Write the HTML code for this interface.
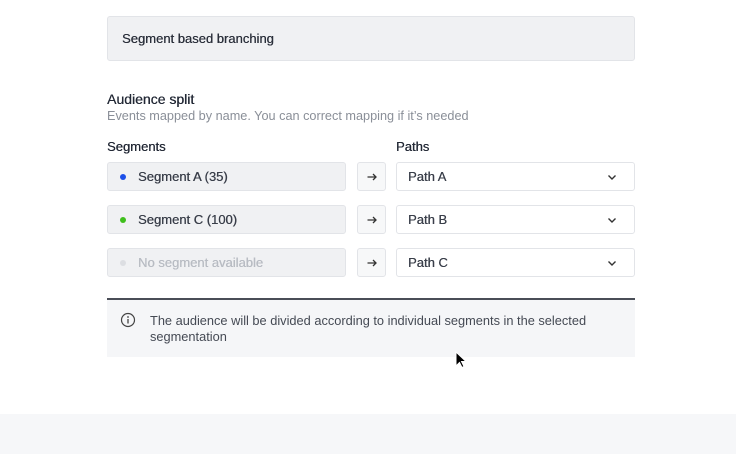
<!DOCTYPE html>
<html><head><style>
*{box-sizing:border-box;margin:0;padding:0}
body{width:736px;height:454px;background:#fff;font-family:"Liberation Sans",sans-serif;color:#232936;position:relative;overflow:hidden}
.abs{position:absolute}
.m{font-weight:normal;text-shadow:0.3px 0 0 currentColor}
.box{position:absolute;border:1px solid #e2e4e8;border-radius:3px}
.seg{background:#f0f1f3;left:107px;width:239px;height:29px;font-size:13px;line-height:27px;padding-left:30px;color:#3a3f4a}
.dot{position:absolute;left:12px;top:11px;width:6px;height:6px;border-radius:50%}
.arr{left:357px;width:29px;height:29px;background:#f7f8f9}
.arr svg{position:absolute;left:8px;top:8px}
.path{left:396px;width:239px;height:29px;background:#fff;font-size:13px;line-height:27px;padding-left:11px;color:#3a3f4a}
.chev{position:absolute;right:16px;top:8px}
</style></head><body>
<div class="box m" style="left:107px;top:16px;width:528px;height:45px;background:#f0f1f3;font-size:13px;line-height:43px;padding-left:14px;color:#2b303b">Segment based branching</div>
<div class="abs m" style="left:107px;top:91px;font-size:14px">Audience split</div>
<div class="abs" style="left:107px;top:109px;font-size:12.7px;color:#8a8f98">Events mapped by name. You can correct mapping if it’s needed</div>
<div class="abs m" style="left:107px;top:139px;font-size:13px">Segments</div>
<div class="abs m" style="left:396px;top:139px;font-size:13px">Paths</div>

<div class="box seg m" style="top:162px"><span class="dot" style="background:#1c4fe8"></span>Segment A (35)</div>
<div class="box seg m" style="top:205px"><span class="dot" style="background:#3fbf1c"></span>Segment C (100)</div>
<div class="box seg m" style="top:248px;color:#b8bcc3"><span class="dot" style="background:#dcdee2"></span>No segment available</div>

<div class="box arr" style="top:162px"><svg width="12" height="12" viewBox="0 0 12 12"><path d="M1.5 6h8.5M7 3l3 3-3 3" fill="none" stroke="#333" stroke-width="1.3"/></svg></div>
<div class="box arr" style="top:205px"><svg width="12" height="12" viewBox="0 0 12 12"><path d="M1.5 6h8.5M7 3l3 3-3 3" fill="none" stroke="#333" stroke-width="1.3"/></svg></div>
<div class="box arr" style="top:248px"><svg width="12" height="12" viewBox="0 0 12 12"><path d="M1.5 6h8.5M7 3l3 3-3 3" fill="none" stroke="#333" stroke-width="1.3"/></svg></div>

<div class="box path m" style="top:162px">Path A<svg class="chev" width="12" height="12" viewBox="0 0 12 12"><path d="M2.5 4.5l3.5 3.5 3.5-3.5" fill="none" stroke="#333" stroke-width="1.4"/></svg></div>
<div class="box path m" style="top:205px">Path B<svg class="chev" width="12" height="12" viewBox="0 0 12 12"><path d="M2.5 4.5l3.5 3.5 3.5-3.5" fill="none" stroke="#333" stroke-width="1.4"/></svg></div>
<div class="box path m" style="top:248px">Path C<svg class="chev" width="12" height="12" viewBox="0 0 12 12"><path d="M2.5 4.5l3.5 3.5 3.5-3.5" fill="none" stroke="#333" stroke-width="1.4"/></svg></div>

<div class="abs" style="left:107px;top:298px;width:528px;height:59px;background:#f5f6f8;border-top:2px solid #4a4e57"></div>
<svg class="abs" style="left:120px;top:312px" width="16" height="16" viewBox="0 0 16 16"><circle cx="8" cy="8" r="6.5" fill="none" stroke="#444" stroke-width="1.2"/><circle cx="8" cy="5" r="0.9" fill="#444"/><path d="M8 7v4.5" stroke="#444" stroke-width="1.3"/></svg>
<div class="abs" style="left:150px;top:313px;width:460px;font-size:12.8px;line-height:16px;color:#454a54">The audience will be divided according to individual segments in the selected segmentation</div>
<svg class="abs" style="left:455px;top:351px" width="12" height="18" viewBox="0 0 12 18"><path d="M1 1v14l3.5-3.5 2.5 5 2-1-2.5-5H11z" fill="#000" stroke="#fff" stroke-width="1"/></svg>
<div class="abs" style="left:0;top:414px;width:736px;height:40px;background:#f6f7f9"></div>
</body></html>
